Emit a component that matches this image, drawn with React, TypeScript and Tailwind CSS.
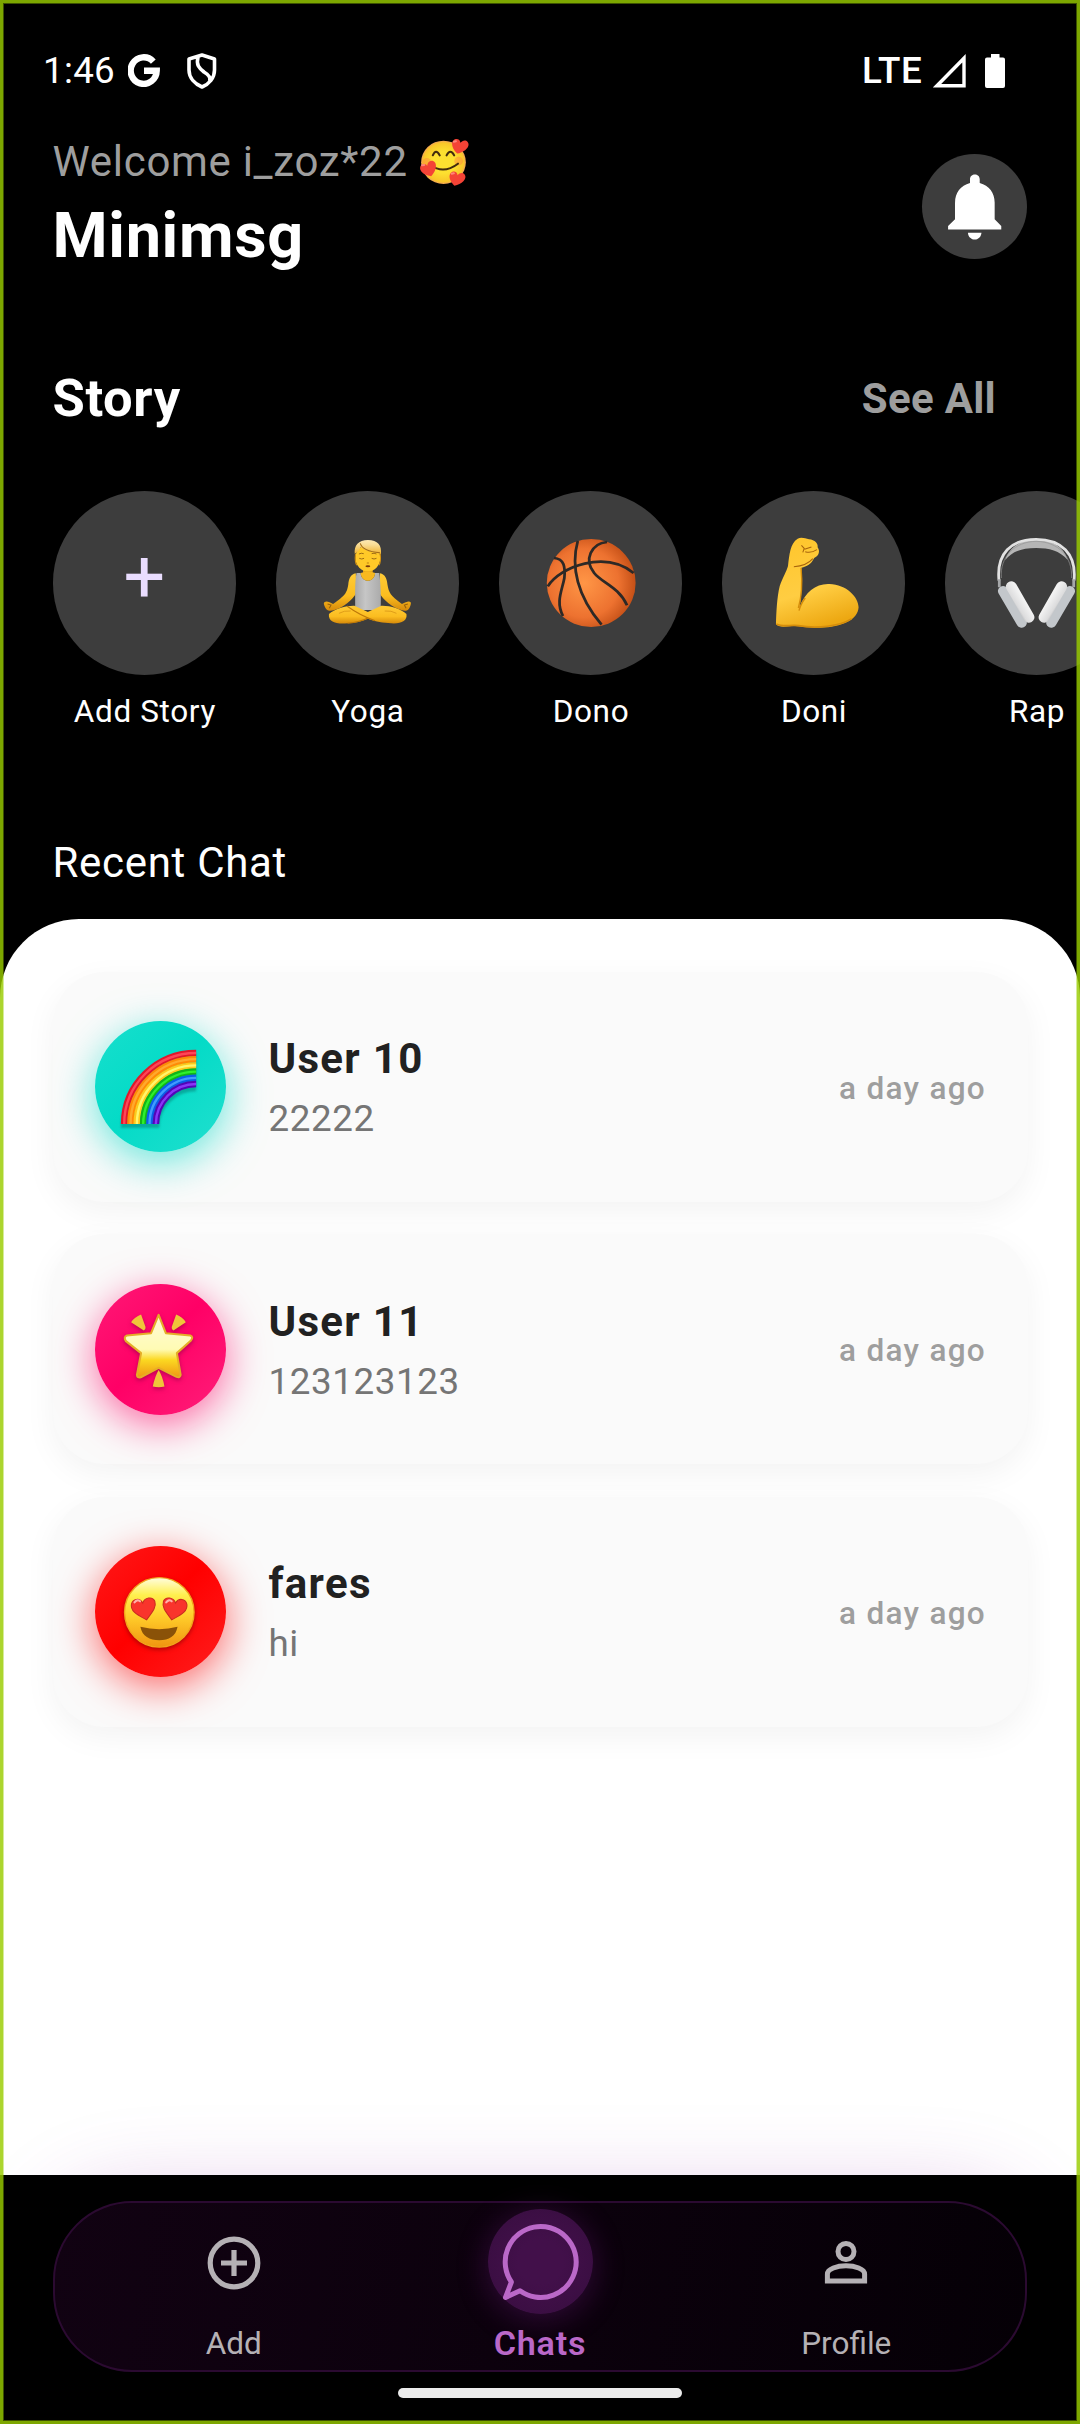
import type { ReactNode } from "react";

function Emoji({ box, className, children }: { box: string; className: string; children: ReactNode }) {
  return (
    <svg viewBox={box} preserveAspectRatio="none" className={className} fill="none">
      {children}
    </svg>
  );
}

function SmilingHearts() {
  const heart = "M0 20 C-26 4 -22 -16 -10 -18 C-3 -19 0 -14 1 -10 C5 -18 12 -22 19 -17 C30 -8 18 12 0 20Z";
  return (
    <Emoji box="1216 408 151 150" className="h-[50px] w-[52px]">
      <defs>
        <radialGradient id="sh" cx=".5" cy=".5" r=".5">
          <stop offset=".5" stopColor="#fde030" />
          <stop offset=".9" stopColor="#f9c629" />
          <stop offset="1" stopColor="#f2a259" />
        </radialGradient>
      </defs>
      <ellipse cx="1290" cy="484" rx="65" ry="65" fill="url(#sh)" />
      <circle cx="1242" cy="484" r="13" fill="#ff7043" opacity=".35" />
      <circle cx="1334" cy="480" r="13" fill="#ff7043" opacity=".35" />
      <path d="M1259 463 Q1268 441 1279 463 M1299 463 Q1310 441 1321 463" stroke="#422b0d" strokeWidth="6" strokeLinecap="round" />
      <path d="M1252 492 Q1290 521 1332 488" stroke="#422b0d" strokeWidth="6" strokeLinecap="round" />
      <path d={heart} fill="#f44336" transform="translate(1335 436) rotate(14) scale(1.12)" />
      <path d={heart} fill="#f44336" transform="translate(1246 505) rotate(-22) scale(1.12)" />
      <path d={heart} fill="#f44336" transform="translate(1327 533) rotate(14) scale(1.08)" />
      <path d="M1320 422 l6 -1 M1228 493 l6 -1 M1314 518 l6 -1" stroke="#ff847a" strokeWidth="6" strokeLinecap="round" />
    </Emoji>
  );
}

function Yoga() {
  return (
    <Emoji box="930 558 273 282" className="h-[94px] w-[94px]">
      <defs>
        <linearGradient id="skin" x1="0" y1="0" x2="0" y2="1">
          <stop offset="0" stopColor="#ffcb36" />
          <stop offset=".6" stopColor="#fbbd20" />
          <stop offset="1" stopColor="#d68a0a" />
        </linearGradient>
        <linearGradient id="hair" x1="0" y1="0" x2="0" y2="1">
          <stop offset="0" stopColor="#fde9b4" />
          <stop offset=".35" stopColor="#f9dc94" />
          <stop offset="1" stopColor="#f0b32c" />
        </linearGradient>
        <linearGradient id="tank" x1="0" y1="0" x2="1" y2="0">
          <stop offset="0" stopColor="#a9a9a9" />
          <stop offset=".4" stopColor="#c6c6c6" />
          <stop offset="1" stopColor="#ababab" />
        </linearGradient>
      </defs>
      <path d="M1055 650 H1083 V680 H1055Z" fill="#e9a81c" />
      <path d="M1034 670 C1018 674 1014 686 1012 704 C1008 728 1004 736 968 762 C954 752 942 752 941 761 C946 781 954 784 970 781 C998 772 1024 750 1036 728 Z" fill="url(#skin)" />
      <path d="M1104 670 C1120 674 1124 686 1126 704 C1130 728 1134 736 1168 762 C1184 752 1195 752 1194 761 C1190 781 1182 784 1168 781 C1140 772 1114 750 1102 728 Z" fill="url(#skin)" />
      <path d="M952 762 l10 3 l-5 10 M1185 762 l-10 3 l5 10" stroke="#98610c" strokeWidth="3" />
      <path d="M1036 669 H1048 C1050 700 1088 700 1090 669 H1102 C1106 700 1108 740 1106 780 H1032 C1033 740 1030 700 1036 669Z" fill="url(#tank)" />
      <path d="M1048 669 C1050 700 1088 700 1090 669 Q1070 662 1048 669Z" fill="#f8b91f" />
      <path d="M956 792 C972 776 1008 766 1030 767 L1069 786 L1108 767 C1132 766 1166 776 1181 792 C1185 814 1162 824 1128 819 Q1092 816 1069 806 Q1044 818 1010 820 C975 823 953 815 956 792Z" fill="url(#skin)" />
      <path d="M1008 768 C1035 788 1055 800 1090 812 M1069 804 Q1048 816 1010 820" stroke="#bd7808" strokeWidth="3" />
      <path d="M985 790 q15 -9 34 -7 M1152 790 q-15 -9 -34 -7" stroke="#d18c10" strokeWidth="2" />
      <ellipse cx="1069" cy="624" rx="36" ry="40" fill="#ffc928" />
      <path d="M1031 612 C1028 586 1042 570 1069 570 C1098 570 1110 586 1107 612 C1088 608 1062 604 1048 590 C1046 600 1038 606 1031 612Z" fill="url(#hair)" />
      <path d="M1047 580 C1052 598 1078 606 1104 608" stroke="#a06b17" strokeWidth="3" />
      <path d="M1033 612 C1031 630 1033 640 1037 646 M1105 612 C1107 630 1105 640 1101 646" stroke="#d6930f" strokeWidth="3" />
      <path d="M1043 612 q7 -4 14 -1 M1080 611 q7 -3 14 1 M1044 625 q7 4 14 0 M1080 625 q7 4 14 0" stroke="#8d5c10" strokeWidth="2.5" />
      <path d="M1066 639 h6" stroke="#b97d12" strokeWidth="3" />
      <ellipse cx="1069" cy="649" rx="7" ry="3" fill="#7b3a0c" />
    </Emoji>
  );
}

function Basketball() {
  return (
    <Emoji box="10 558 273 282" className="h-[94px] w-[94px]">
      <defs>
        <radialGradient id="ball" cx=".42" cy=".5" r=".6">
          <stop offset="0" stopColor="#ff9646" />
          <stop offset=".65" stopColor="#ed7230" />
          <stop offset="1" stopColor="#c04c14" />
        </radialGradient>
      </defs>
      <ellipse cx="150" cy="699" rx="129" ry="132" fill="url(#ball)" />
      <g stroke="#2d2926" strokeWidth="8">
        <path d="M24 709 C60 650 190 600 273 669" />
        <path d="M111 573 C90 650 110 740 180 824" />
        <path d="M196 576 C150 580 128 630 158 668 C180 698 230 710 254 766" />
        <path d="M42 624 C72 626 75 652 72 684 C66 720 46 755 68 798" />
      </g>
    </Emoji>
  );
}

function Biceps() {
  return (
    <Emoji box="657 558 273 282" className="h-[94px] w-[94px]">
      <defs>
        <linearGradient id="arm" x1=".2" y1="0" x2=".5" y2="1">
          <stop offset="0" stopColor="#ffc62c" />
          <stop offset=".6" stopColor="#ffcd42" />
          <stop offset="1" stopColor="#eda812" />
        </linearGradient>
      </defs>
      <path
        d="M746 566 C758 560 768 566 779 568 C796 570 806 580 804 592 C812 604 808 618 794 624 C786 642 772 650 757 653 C760 692 758 732 752 770 C768 726 800 700 838 702 C888 704 922 740 923 772 C921 810 874 832 812 833 C774 834 742 826 728 828 C706 831 690 832 683 823 C684 790 686 740 694 708 C702 684 714 664 718 648 C722 614 724 580 746 566Z"
        fill="url(#arm)"
      />
      <path d="M684 822 C704 832 724 824 748 827 C800 836 868 830 903 806" stroke="#d58d0b" strokeWidth="5" />
      <path d="M756 654 C760 700 758 740 748 774 M768 744 Q754 764 750 782" stroke="#d58d0b" strokeWidth="4" />
      <path d="M757 586 l8 9 l-4 12 M766 598 l20 -7 M768 605 q16 6 34 -6 M790 626 Q772 648 735 650" stroke="#a8640c" strokeWidth="3" />
    </Emoji>
  );
}

function Headphones() {
  return (
    <Emoji box="1308 558 273 282" className="h-[94px] w-[94px]">
      <defs>
        <linearGradient id="padL" gradientUnits="userSpaceOnUse" x1="1356" y1="748" x2="1392" y2="726">
          <stop offset="0" stopColor="#9fa1a4" />
          <stop offset=".4" stopColor="#dcdcdd" />
          <stop offset="1" stopColor="#f2f2f2" />
        </linearGradient>
        <linearGradient id="padR" gradientUnits="userSpaceOnUse" x1="1530" y1="748" x2="1494" y2="726">
          <stop offset="0" stopColor="#9fa1a4" />
          <stop offset=".4" stopColor="#dcdcdd" />
          <stop offset="1" stopColor="#f2f2f2" />
        </linearGradient>
      </defs>
      <path d="M1352 630 C1364 590 1400 568 1442 568 C1484 568 1522 590 1534 630 C1510 602 1480 594 1442 594 C1404 594 1374 602 1352 630Z" fill="#b5b5b5" />
      <path d="M1334 692 C1326 610 1370 568 1442 568 C1514 568 1560 610 1552 692" stroke="#e2e2e2" strokeWidth="8" />
      <path d="M1341 684 C1336 620 1380 575 1442 574 C1506 575 1548 620 1545 684" stroke="#949494" strokeWidth="2" />
      <path d="M1335 688 V712 M1551 688 V712" stroke="#a5a7a9" strokeWidth="8" />
      <g strokeLinecap="round">
        <path d="M1346 723 L1400 818" stroke="#c3c7cb" strokeWidth="30" />
        <path d="M1540 723 L1486 818" stroke="#c3c7cb" strokeWidth="30" />
        <path d="M1370 710 L1421 802" stroke="url(#padL)" strokeWidth="32" />
        <path d="M1516 710 L1465 802" stroke="url(#padR)" strokeWidth="32" />
      </g>
    </Emoji>
  );
}

const rainbowBands = [
  { edge: "#e0182b", shine: "#ff4657" },
  { edge: "#ff8a05", shine: "#ffa92e" },
  { edge: "#ffc91c", shine: "#fff56a" },
  { edge: "#12b31a", shine: "#2ef02c" },
  { edge: "#0b5fe8", shine: "#3f9cff" },
  { edge: "#5206b8", shine: "#8a35f7" },
];

function Rainbow() {
  return (
    <Emoji box="344 733 244 252" className="h-[84px] w-[84px] drop-shadow-[0_4px_1px_rgba(0,60,60,0.3)]">
      {rainbowBands.map((b, i) => {
        const rx = 209 - i * 18.4;
        const ry = 213 - i * 18.6;
        const d = `M${571 - rx} 970 A${rx} ${ry} 0 0 1 571 ${970 - ry}`;
        return (
          <g key={b.edge}>
            <path d={d} stroke={b.edge} strokeWidth="19.5" />
            <path d={d} stroke={b.shine} strokeWidth="7" />
          </g>
        );
      })}
    </Emoji>
  );
}

function GlowStar() {
  return (
    <Emoji box="344 253 244 244" className="h-[84px] w-[84px] drop-shadow-[0_2px_2px_rgba(120,0,60,0.5)]">
      <defs>
        <linearGradient id="star" x1="0" y1="0" x2="0" y2="1">
          <stop offset="0" stopColor="#fffbd8" />
          <stop offset=".55" stopColor="#fffbb4" />
          <stop offset=".72" stopColor="#fbd821" />
          <stop offset="1" stopColor="#ee9714" />
        </linearGradient>
      </defs>
      <path
        d="M462 276 L483 329 L554 336 Q564 340 556 350 L515 387 L526 450 Q524 460 514 456 L462 430 L410 457 Q400 460 399 450 L411 387 L367 352 Q359 340 370 336 L440 329Z"
        fill="url(#star)"
        stroke="#e6ad27"
        strokeWidth="6"
        strokeLinejoin="round"
      />
      <path d="M411 275 Q392 283 382 297 L419 321 Q425 318 424 311Z M513 275 Q532 283 541 297 L505 321 Q499 318 500 311Z M462 436 Q451 455 445 484 Q462 488 479 484 Q474 455 462 436Z" fill="#f0c53a" />
    </Emoji>
  );
}

function HeartEyes() {
  const heart = "M10 34 C-14 20 -38 10 -34 -12 C-30 -28 -10 -31 -1 -15 C4 -31 27 -36 34 -20 C40 -2 24 14 10 34Z";
  return (
    <Emoji box="344 1015 244 244" className="h-[84px] w-[84px] drop-shadow-[0_2px_2px_rgba(100,0,0,0.5)]">
      <defs>
        <linearGradient id="he" x1="0" y1="0" x2="0" y2="1">
          <stop offset="0" stopColor="#fffde0" />
          <stop offset=".25" stopColor="#fff04e" />
          <stop offset=".55" stopColor="#ffcf2b" />
          <stop offset="1" stopColor="#f09410" />
        </linearGradient>
      </defs>
      <circle cx="464" cy="1138" r="101" fill="url(#he)" stroke="#f2a51b" strokeWidth="4" />
      <g fill="#f9342c" stroke="#c92b20" strokeWidth="3">
        <path d={heart} transform="translate(417 1126)" />
        <path d={heart} transform="translate(510 1126) scale(-1 1)" />
      </g>
      <path d="M392 1109 q8 -10 16 -3 M484 1109 q8 -10 16 -3" stroke="#ffb1ab" strokeWidth="6" strokeLinecap="round" />
      <path d="M409 1180 Q464 1194 517 1180 C512 1208 492 1219 464 1219 C436 1219 414 1208 409 1180Z" fill="#8a5208" />
    </Emoji>
  );
}

function StatusBar() {
  return (
    <div className="flex h-[141px] shrink-0 items-center justify-between pr-[75px] pl-[43px] text-[36.75px] leading-none text-white">
      <div className="flex items-center">
        <span className="mt-[2px] w-[85px] tracking-[0.3px]">1:46</span>
        <svg viewBox="0 0 32 33" className="h-[33px] w-[32px]" fill="none" stroke="white" strokeWidth="6.4">
          <path d="M25.3 7.6 A13 13.3 0 1 0 28.7 16.8 H16" />
        </svg>
        <svg viewBox="0 0 30 36" className="ml-[27px] h-[36px] w-[30px]" fill="none" stroke="white" strokeWidth="3.6" strokeLinejoin="round">
          <path d="M15 2 L27.5 6 V17 C27.5 25 22 31 15 34 C8 31 2 25 2 17 V6 Z M11 4 C9 12 12 15 17 19 C22 22 24 25 22.5 28" />
        </svg>
      </div>
      <div className="flex items-center">
        <span className="mt-[2px] w-[72px] pl-px font-medium tracking-[0.6px]">LTE</span>
        <svg viewBox="0 0 34 34" className="h-[34px] w-[34px]" fill="none" stroke="white" strokeWidth="3.4">
          <path d="M4 31.7 H31 V4.2 Z" />
        </svg>
        <svg viewBox="0 0 20 34" className="ml-[18px] h-[34px] w-[20px]" fill="white">
          <path d="M6 0 H14.5 V3.5 H18 Q20 3.5 20 5.5 V32 Q20 34 18 34 H2 Q0 34 0 32 V5.5 Q0 3.5 2 3.5 H6Z" />
        </svg>
      </div>
    </div>
  );
}

const stories = [
  { name: "Add Story", art: <span className="-mt-[10px] text-[73.5px] leading-none text-[#eaddff]">+</span> },
  { name: "Yoga", art: <Yoga /> },
  { name: "Dono", art: <Basketball /> },
  { name: "Doni", art: <Biceps /> },
  { name: "Rap", art: <Headphones /> },
];

const chats = [
  {
    name: "User 10",
    message: "22222",
    art: <Rainbow />,
    avatar: "bg-[linear-gradient(135deg,#17dfcd_0%,#04dbc7_48%,#22dfcf_100%)] shadow-[0_10px_42px_rgba(4,219,199,0.6)]",
  },
  {
    name: "User 11",
    message: "123123123",
    art: <GlowStar />,
    avatar: "bg-[linear-gradient(135deg,#ff1976_0%,#ff0066_48%,#ff1f79_100%)] shadow-[0_10px_42px_rgba(255,0,102,0.6)]",
  },
  {
    name: "fares",
    message: "hi",
    art: <HeartEyes />,
    avatar: "bg-[linear-gradient(135deg,#ff1919_0%,#ff0000_48%,#ff1f1f_100%)] shadow-[0_10px_42px_rgba(255,0,0,0.6)]",
  },
];

function NavBar() {
  return (
    <div className="relative shrink-0">
      {/* Purple glow that rises over the chat sheet from behind the bar */}
      <div className="absolute top-[26px] left-[53px] h-[171px] w-[974px] rounded-[79px] shadow-[0_0_84px_8px_rgba(146,50,166,0.26)]" />
      <nav className="relative flex h-[249px] flex-col items-center bg-black pt-[26px]">
        <div className="flex h-[171px] w-[974px] rounded-[79px] border-[2.6px] border-[#2b0a31] bg-[linear-gradient(98deg,#110212_0%,#0b010c_55%,#050006_100%)] px-[20px]">
          <div className="flex flex-1 flex-col items-center pl-[5px] text-[#b5b1b5]">
            <svg viewBox="0 0 54 54" className="mt-[33px] h-[54px] w-[54px]" fill="none" stroke="currentColor" strokeWidth="5.2">
              <circle cx="27" cy="27" r="23.8" />
              <path d="M27 14 V40 M14 27 H40" />
            </svg>
            <span className="mt-[36px] text-[31.5px] leading-[36px]">Add</span>
          </div>
          <div className="flex w-[305px] flex-col items-center text-[#ba68c8]">
            <div className="mt-[6px] h-[105px] w-[105px] rounded-full bg-[radial-gradient(circle,#42104a_30%,#360d3e_100%)] shadow-[0_5px_32px_rgba(156,39,176,0.28)]">
              <svg viewBox="488 2208.5 105 105" className="h-[105px] w-[105px]" fill="none" stroke="currentColor" strokeWidth="5" strokeLinejoin="round">
                <path d="M520 2290.3 A35.5 35.5 0 1 0 511.4 2281.5 L505.5 2297 Z" />
              </svg>
            </div>
            <span className="mt-[9px] text-[34.1px] leading-[40px] font-semibold tracking-[0.8px]">Chats</span>
          </div>
          <div className="flex flex-1 flex-col items-center pr-[5px] text-[#b5b1b5]">
            <svg viewBox="0 0 54 54" className="mt-[32px] h-[54px] w-[54px]" fill="none" stroke="currentColor" strokeWidth="5">
              <circle cx="27" cy="16.5" r="8" />
              <path d="M8.4 46 V39 C8.4 34 18 30.7 27 30.7 C36 30.7 45.6 34 45.6 39 V46 Z" />
            </svg>
            <span className="mt-[37px] text-[31.5px] leading-[36px]">Profile</span>
          </div>
        </div>
        <div className="mt-[16px] h-[10px] w-[284px] rounded-full bg-[#ebebeb]" />
      </nav>
    </div>
  );
}

export default function App() {
  return (
    <div className="relative flex h-[2424px] w-[1080px] flex-col overflow-hidden bg-black font-['Roboto',sans-serif]">
      <StatusBar />

      <header className="-mt-[4px] flex h-[138px] shrink-0 items-center justify-between pr-[53px] pl-[52.5px]">
        <div className="-mt-[2px] flex flex-col">
          <div className="flex h-[50px] items-center">
            <span className="text-[42px] leading-[50px] tracking-[0.7px] text-[#9e9e9e]">Welcome i_zoz*22</span>
            <div className="ml-[10px]"><SmilingHearts /></div>
          </div>
          <h1 className="mt-[12px] text-[63px] leading-[74px] font-bold tracking-[0.65px] text-white">Minimsg</h1>
        </div>
        <button className="h-[105px] w-[105px] overflow-hidden rounded-full bg-[#3d3d3d]">
          <svg viewBox="1111 462 302 312" preserveAspectRatio="none" className="h-[105px] w-[105px]" fill="white">
            <path d="M1249 548 V537 C1249 518 1277 518 1277 537 V548 C1304 555 1320 578 1320 606 V656 L1339 676 V686 H1186 V676 L1206 656 V606 C1206 578 1222 555 1249 548Z" />
            <path d="M1243 696 H1282 C1280 723 1245 723 1243 696Z" />
          </svg>
        </button>
      </header>

      <section className="mt-[92px] h-[453px] shrink-0">
        <div className="flex h-[62px] items-center justify-between pr-[84px] pl-[52.5px]">
          <h2 className="text-[52.5px] leading-[62px] font-bold tracking-[0.6px] text-white">Story</h2>
          <span className="pt-px text-[42px] leading-[62px] font-bold tracking-[0.3px] text-[#9e9e9e]">See All</span>
        </div>
        <div className="mt-[62px] flex gap-[39.3px] overflow-hidden pl-[52.5px]">
          {stories.map((s) => (
            <div key={s.name} className="flex w-[183.75px] shrink-0 flex-col items-center">
              <div className="flex h-[183.75px] w-[183.75px] items-center justify-center rounded-full bg-[#3d3d3d]">{s.art}</div>
              <span className="mt-[18px] pl-px text-[31.5px] leading-[37px] tracking-[0.63px] whitespace-nowrap text-white">{s.name}</span>
            </div>
          ))}
        </div>
      </section>

      <h3 className="mt-[18px] h-[81px] shrink-0 pl-[52.5px] text-[42px] leading-[50px] tracking-[0.7px] text-white">Recent Chat</h3>

      <main className="flex flex-1 flex-col gap-[32.5px] rounded-t-[79px] bg-white px-[52.5px] pt-[52.5px]">
        {chats.map((c) => (
          <article key={c.name} className="flex h-[230px] shrink-0 items-center rounded-[52px] bg-[#fafafa] pr-[41.5px] pl-[42px] shadow-[0_10px_32px_rgba(0,0,0,0.05)]">
            <div className={`flex h-[131px] w-[131px] items-center justify-center rounded-full ${c.avatar}`}>{c.art}</div>
            <div className="ml-[43px] flex flex-1 flex-col pt-[5px]">
              <span className="text-[42px] leading-[50px] font-bold tracking-[1.3px] text-[#212121]">{c.name}</span>
              <span className="mt-[10px] text-[36.75px] leading-[50px] tracking-[0.6px] text-[#757575]">{c.message}</span>
            </div>
            <span className="pt-[3px] text-[31.5px] leading-[37px] font-medium tracking-[1.3px] text-[#9e9e9e]">a day ago</span>
          </article>
        ))}
      </main>

      <NavBar />

      <div className="pointer-events-none absolute inset-0 border-[3px] border-[#99cc00]/82" />
      <div className="pointer-events-none absolute inset-[3px] border border-[#99cc00]/40" />
    </div>
  );
}
